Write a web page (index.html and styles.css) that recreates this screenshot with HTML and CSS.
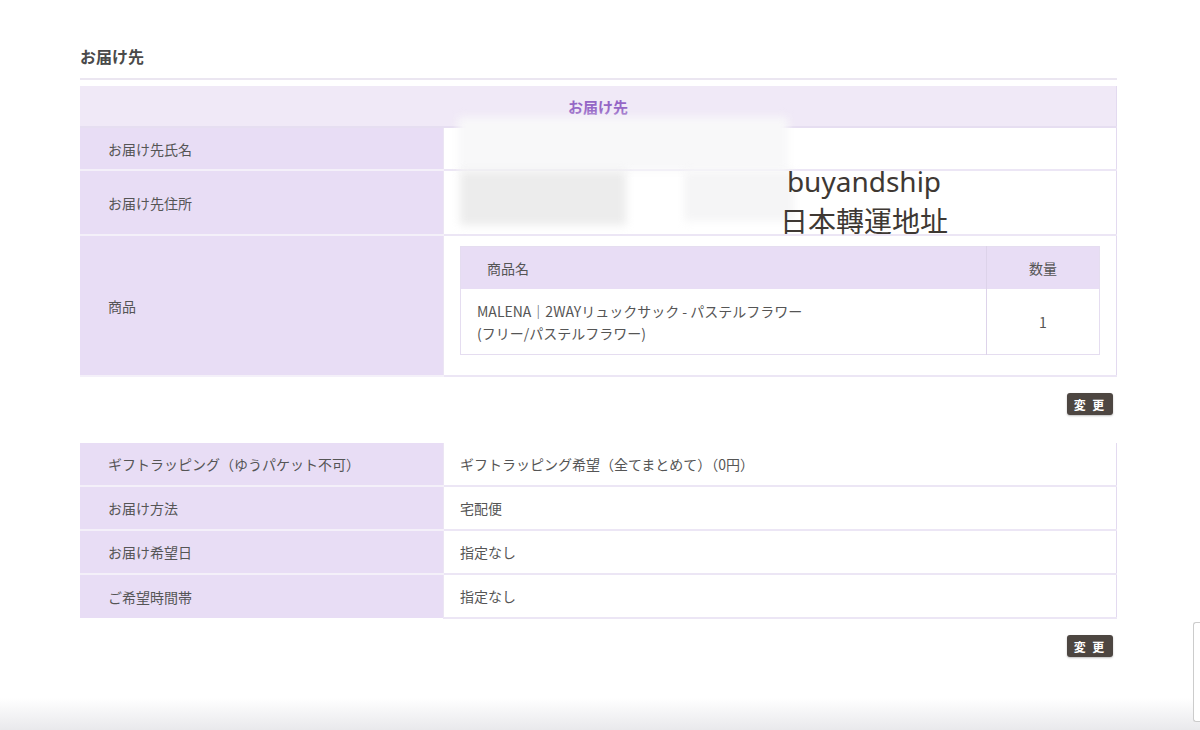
FILE: index.html
```html
<!DOCTYPE html>
<html lang="ja">
<head>
  <meta charset="UTF-8">
  <title>お届け先</title>
  <link rel="stylesheet" href="styles.css">
</head>
<body>
  <div class="page">
    <h2 class="section-title">お届け先</h2>

    <table class="info-table">
      <tr>
        <th colspan="2" class="table-caption">お届け先</th>
      </tr>
      <tr class="row-name">
        <th>お届け先氏名</th>
        <td class="masked"></td>
      </tr>
      <tr class="row-addr">
        <th>お届け先住所</th>
        <td class="masked"></td>
      </tr>
      <tr>
        <th>商品</th>
        <td class="goods-cell">
          <table class="goods-table">
            <tr>
              <th class="goods-name">商品名</th>
              <th class="goods-qty">数量</th>
            </tr>
            <tr>
              <td class="goods-name">MALENA｜2WAYリュックサック - パステルフラワー<br>(フリー/パステルフラワー)</td>
              <td class="goods-qty">1</td>
            </tr>
          </table>
        </td>
      </tr>
    </table>
    <div class="btn-row"><button class="change-btn">変 更</button></div>

    <table class="info-table second">
      <tr>
        <th>ギフトラッピング（ゆうパケット不可）</th>
        <td>ギフトラッピング希望（全てまとめて）（0円）</td>
      </tr>
      <tr>
        <th>お届け方法</th>
        <td>宅配便</td>
      </tr>
      <tr>
        <th>お届け希望日</th>
        <td>指定なし</td>
      </tr>
      <tr>
        <th>ご希望時間帯</th>
        <td>指定なし</td>
      </tr>
    </table>
    <div class="btn-row"><button class="change-btn">変 更</button></div>

    <!-- 個人情報ぼかし -->
    <div class="blur blur-a"></div>
    <div class="blur blur-b"></div>
    <div class="blur blur-c"></div>
    <div class="watermark">
      <span class="wm-en">buyandship</span>
      <span class="wm-ja">日本轉運地址</span>
    </div>
  </div>
  <div class="bottom-shade"></div>
  <div class="side-widget"></div>
</body>
</html>
```

FILE: styles.css
```css
body {
  margin: 0;
  background: #fff;
  color: #555;
  font-family: "Noto Sans CJK JP", "Noto Sans", sans-serif;
  font-size: 14px;
  height: 730px;
  overflow: hidden;
}
.page {
  position: relative;
  width: 1037px;
  margin: 0 auto 0 80px;
  padding-top: 44px;
}
.section-title {
  margin: 0;
  padding-bottom: 10px;
  font-size: 16px;
  font-weight: bold;
  color: #4a4a4a;
  line-height: 24px;
  border-bottom: 2px solid #ebe6f1;
  margin-bottom: 6px;
}
.info-table {
  width: 100%;
  border-collapse: collapse;
  border-right: 1px solid #e3daf0;
}
.info-table th {
  width: 335px;
  background: #e8ddf5;
  text-align: left;
  font-weight: normal;
  padding: 0 0 0 28px;
  border-bottom: 2px solid #f4f0f9;
  color: #555;
  height: 41px;
}
.info-table td {
  background: #fff;
  padding: 0 16px;
  border-bottom: 2px solid #ece6f5;
  border-left: 1px solid #ebe5f3;
}
.info-table .table-caption {
  background: #f0e9f7;
  text-align: center;
  padding: 0;
  color: #9566c6;
  font-weight: bold;
  font-size: 15px;
  height: 40px;
  border-bottom: 2px solid #e6def1;
}
.info-table .row-addr th {
  height: 63px;
}
.info-table .goods-cell {
  padding: 10px 16px 20px;
}
.goods-table {
  width: 100%;
  border-collapse: collapse;
  border: 1px solid #e5ddf0;
}
.info-table .goods-table th {
  width: auto;
  background: #e8ddf5;
  font-weight: normal;
  height: 42px;
  text-align: left;
  padding: 0 0 0 26px;
  border-bottom: 0;
  color: #555;
}
.info-table .goods-table th.goods-qty {
  text-align: center;
  padding: 0;
  width: 112px;
  border-left: 1px solid #ddd3ea;
}
.info-table .goods-table td {
  border: 0;
  height: 65px;
  padding: 0 16px;
  line-height: 22px;
}
.info-table .goods-table td.goods-qty {
  text-align: center;
  border-left: 1px solid #ddd3ea;
  width: 112px;
  padding: 0;
}
.info-table.second td,
.info-table.second th {
  height: 42px;
}
.info-table.second tr:last-child th {
  border-bottom: 0;
}
.btn-row {
  display: flex;
  justify-content: flex-end;
  padding: 16px 4px 0 0;
  height: 50px;
}
.change-btn {
  background: #4d4641;
  color: #fff;
  border: 0;
  border-radius: 3px;
  width: 46px;
  height: 22px;
  font-family: "Noto Sans CJK JP", sans-serif;
  font-size: 12px;
  font-weight: bold;
  padding: 0;
  letter-spacing: 2px;
  box-shadow: 0 1px 2px rgba(0,0,0,0.25);
}
.blur {
  position: absolute;
  filter: blur(4px);
}
.blur-a {
  left: 378px;
  top: 117px;
  width: 330px;
  height: 54px;
  background: #f8f8f9;
}
.blur-b {
  left: 380px;
  top: 171px;
  width: 166px;
  height: 54px;
  background: #ececec;
}
.blur-c {
  left: 604px;
  top: 171px;
  width: 110px;
  height: 50px;
  background: #f5f5f6;
}
.watermark {
  position: absolute;
  left: 650px;
  top: 161px;
  width: 268px;
  display: flex;
  flex-direction: column;
  align-items: center;
  color: #3e3833;
}
.wm-en {
  font-family: "Noto Sans", sans-serif;
  font-size: 28px;
  line-height: 40px;
}
.wm-ja {
  font-family: "Noto Sans CJK TC", sans-serif;
  font-size: 28px;
  line-height: 38px;
}
.bottom-shade {
  position: fixed;
  left: 0;
  right: 0;
  bottom: 0;
  height: 32px;
  background: linear-gradient(#fff, #e9e9ec);
}
.side-widget {
  position: fixed;
  right: 0;
  top: 622px;
  width: 6px;
  height: 98px;
  border: 1px solid #ccc;
  border-right: 0;
  border-radius: 3px 0 0 3px;
  background: #fff;
}
```
